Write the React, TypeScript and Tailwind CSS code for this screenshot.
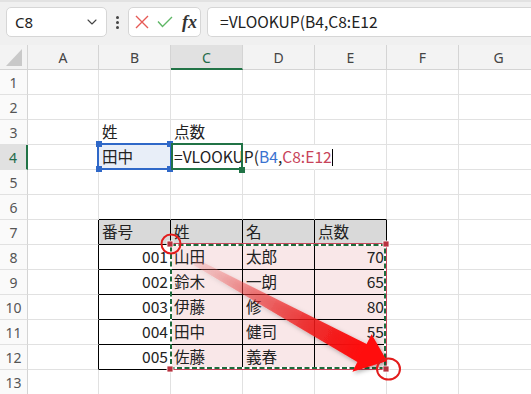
import type { ReactNode } from "react";
import { ChevronDown } from "lucide-react";

type Col = { key: string; w: string };

const COLS: Col[] = [
  { key: "A", w: "w-[71px]" },
  { key: "B", w: "w-[72px]" },
  { key: "C", w: "w-[72px]" },
  { key: "D", w: "w-[72px]" },
  { key: "E", w: "w-[72px]" },
  { key: "F", w: "w-[72px]" },
  { key: "G", w: "w-[80px]" },
];

const ROWS = [1, 2, 3, 4, 5, 6, 7, 8, 9, 10, 11, 12, 13];

const FORMULA = (
  <>
    =VLOOKUP(<span className="text-[#3a72d0]">B4</span>,<span className="text-[#c8445a]">C8:E12</span>
  </>
);

const DATA: Record<string, { text: ReactNode; right?: boolean }> = {
  B3: { text: "姓" },
  C3: { text: "点数" },
  B4: { text: "田中" },
  C4: { text: FORMULA },
  B7: { text: "番号" },
  C7: { text: "姓" },
  D7: { text: "名" },
  E7: { text: "点数" },
};

const people = [
  ["001", "山田", "太郎", "70"],
  ["002", "鈴木", "一朗", "65"],
  ["003", "伊藤", "修", "80"],
  ["004", "田中", "健司", "55"],
  ["005", "佐藤", "義春", "90"],
];
people.forEach((p, i) => {
  const r = i + 8;
  DATA[`B${r}`] = { text: p[0], right: true };
  DATA[`C${r}`] = { text: p[1] };
  DATA[`D${r}`] = { text: p[2] };
  DATA[`E${r}`] = { text: p[3], right: true };
});

function fillFor(id: string, col: string, r: number) {
  if (id === "B4") return "bg-[#e8eef8]";
  if (r === 7 && "BCDE".includes(col)) return "bg-[#d9d9d9]";
  if (r >= 8 && r <= 12 && "CDE".includes(col)) return "bg-[#f9e7e8]";
  return "";
}

function FormulaBar() {
  return (
    <div className="flex h-[45px] items-start border-t-2 border-[#e2e2e2] bg-[#f0f0f0] pt-[5px]">
      <div className="ml-[6px] flex h-[30px] w-[101px] items-center justify-between rounded-[5px] border border-[#d6d6d6] bg-white pr-[6px] pl-[8px] font-['Noto_Sans',sans-serif] text-[15px] text-[#222]">
        <span>C8</span>
        <ChevronDown size={16} strokeWidth={1.6} className="text-[#444]" />
      </div>
      <div className="flex h-[30px] w-[21px] flex-col items-center justify-center gap-[2px]">
        <span className="h-[3px] w-[3px] rounded-full bg-[#444]" />
        <span className="h-[3px] w-[3px] rounded-full bg-[#444]" />
        <span className="h-[3px] w-[3px] rounded-full bg-[#444]" />
      </div>
      <div className="flex h-[30px] w-[73px] items-center rounded-[5px] border border-[#d6d6d6] bg-white pl-[6px]">
        <svg width="14" height="14" viewBox="0 0 14 14">
          <path d="M1 1 L13 13 M13 1 L1 13" stroke="#e65a56" strokeWidth="1.4" fill="none" />
        </svg>
        <svg width="16" height="12" viewBox="0 0 16 12" className="ml-[8px]">
          <path d="M1 5.5 L5.5 10.5 L15 1" stroke="#5fb766" strokeWidth="1.4" fill="none" />
        </svg>
        <span className="ml-[9px] font-['Liberation_Serif',serif] text-[18px] leading-none font-semibold text-[#333] italic">
          fx
        </span>
      </div>
      <div className="ml-[6px] flex h-[30px] flex-1 items-center rounded-l-[5px] border border-r-0 border-[#d6d6d6] bg-white pl-[12px] font-['Noto_Sans_CJK_JP',sans-serif] text-[15.6px] text-[#222]">
        =VLOOKUP(B4,C8:E12
      </div>
    </div>
  );
}

function HeaderRow() {
  return (
    <div className="flex h-[25px] bg-[#f3f3f3] font-['Noto_Sans',sans-serif] text-[14px]">
      <div className="relative w-[28px] shrink-0 border-r border-b border-[#d4d4d4]">
        <svg width="28" height="24" viewBox="0 0 28 24" className="absolute top-0 left-0">
          <path d="M22 4 L22 21 L6 21 Z" fill="#c9c9c9" />
        </svg>
      </div>
      {COLS.map((c) =>
        c.key === "C" ? (
          <div
            key={c.key}
            className={`${c.w} flex shrink-0 items-center justify-center border-r border-b-2 border-r-[#d4d4d4] border-b-[#217346] bg-[#e1e1e1] pt-[1px] text-[#1f6b4a]`}
          >
            {c.key}
          </div>
        ) : (
          <div
            key={c.key}
            className={`${c.w} flex shrink-0 items-center justify-center border-r border-b border-[#d4d4d4] text-[#444]`}
          >
            {c.key}
          </div>
        ),
      )}
    </div>
  );
}

function Cell({ col, r }: { col: Col; r: number }) {
  const id = `${col.key}${r}`;
  const tb = "BCDE".includes(col.key);
  const inTable = tb && r >= 7 && r <= 12;
  const rightBlack = inTable || (col.key === "A" && r >= 7 && r <= 12);
  const bottomBlack = inTable || (tb && r === 6);
  const data = DATA[id];
  const rightCls = rightBlack
    ? "border-r-black"
    : id === "D4"
      ? "border-r-transparent"
      : "border-r-[#e1e1e1]";
  const bottomCls = bottomBlack ? "border-b-black" : "border-b-[#e1e1e1]";
  return (
    <div
      className={`flex h-full shrink-0 items-center border-r border-b ${col.w} ${rightCls} ${bottomCls} ${fillFor(id, col.key, r)} ${
        data?.right ? "justify-end pr-[2px]" : "pl-[3px]"
      }`}
    >
      {data && <span className="text-[15.6px] leading-none whitespace-nowrap">{data.text}</span>}
    </div>
  );
}

function Row({ r }: { r: number }) {
  const active = r === 4;
  return (
    <div className="flex h-[25px]">
      <div
        className={`flex w-[28px] shrink-0 items-center justify-center border-b border-b-[#e1e1e1] font-['Noto_Sans',sans-serif] text-[14px] ${
          active
            ? "border-r-2 border-r-[#217346] bg-[#e1e1e1] text-[#1f6b4a]"
            : "border-r border-r-[#d4d4d4] bg-[#fafafa] text-[#555]"
        }`}
      >
        {r}
      </div>
      {COLS.map((c) => (
        <Cell key={c.key} col={c} r={r} />
      ))}
    </div>
  );
}

function Handle({ cls }: { cls: string }) {
  return <span className={`absolute h-[6px] w-[6px] ${cls}`} />;
}

function Overlays() {
  return (
    <>
      {/* B4 reference (blue) */}
      <div className="pointer-events-none absolute top-[143px] left-[97px] h-[27px] w-[75px] border-2 border-[#2f68c8]" />
      <Handle cls="top-[141px] left-[96px] bg-[#2f68c8]" />
      <Handle cls="top-[141px] left-[167px] bg-[#2f68c8]" />
      <Handle cls="top-[166px] left-[96px] bg-[#2f68c8]" />
      <Handle cls="top-[166px] left-[167px] bg-[#2f68c8]" />

      {/* C4 editing cell (green) */}
      <div className="pointer-events-none absolute top-[143px] left-[171px] h-[27px] w-[72px] border-2 border-[#217346]" />
      <Handle cls="top-[167px] left-[239px] bg-[#217346]" />

      {/* text cursor */}
      <span className="absolute top-[149px] left-[332px] h-[17px] w-[1px] bg-black" />

      <svg width="531" height="394" viewBox="0 0 531 394" className="pointer-events-none absolute top-0 left-0">
        <defs>
          <linearGradient id="arrowFill" gradientUnits="userSpaceOnUse" x1="195" y1="262" x2="362" y2="353">
            <stop offset="0" stopColor="#f08080" stopOpacity="0.2" />
            <stop offset="0.35" stopColor="#ee3030" stopOpacity="0.55" />
            <stop offset="0.7" stopColor="#f01818" stopOpacity="0.85" />
            <stop offset="1" stopColor="#ff0a0a" stopOpacity="1" />
          </linearGradient>
          <filter id="shadow" x="-20%" y="-20%" width="140%" height="140%">
            <feDropShadow dx="1.5" dy="2" stdDeviation="2" floodColor="#000" floodOpacity="0.3" />
          </filter>
        </defs>

        {/* C8:E12 reference range */}
        <rect x="170.5" y="243.5" width="216" height="126" fill="none" stroke="#c8445a" strokeWidth="1" />
        <rect x="171" y="245" width="214" height="123" fill="none" stroke="#ffffff" strokeWidth="2" />
        <rect x="171" y="245" width="214" height="123" fill="none" stroke="#1e6b3c" strokeWidth="2" strokeDasharray="5 2.5" />
        {[
          [170, 244],
          [386, 244],
          [170, 369],
          [386, 369],
        ].map(([x, y]) => (
          <rect key={`${x}-${y}`} x={x - 3} y={y - 3} width="6" height="6" fill="#b8323f" stroke="#fff" strokeWidth="0.8" />
        ))}

        {/* arrow */}
        <polygon
          points="196.6,258.9 366.6,344.1 371.6,334.3 387,361 352.4,371.7 357.4,361.9 193.4,265.1"
          fill="url(#arrowFill)"
          filter="url(#shadow)"
        />

        {/* circles */}
        <circle cx="171" cy="244" r="9.5" fill="none" stroke="#e21c1c" strokeWidth="2" />
        <ellipse cx="388.5" cy="369" rx="11.5" ry="10.5" fill="none" stroke="#e21c1c" strokeWidth="2" />
      </svg>
    </>
  );
}

export default function App() {
  return (
    <div className="relative h-[394px] w-[531px] overflow-hidden bg-white font-['Noto_Sans_CJK_JP',sans-serif] text-[#222]">
      <FormulaBar />
      <HeaderRow />
      {ROWS.map((r) => (
        <Row key={r} r={r} />
      ))}
      <Overlays />
    </div>
  );
}
